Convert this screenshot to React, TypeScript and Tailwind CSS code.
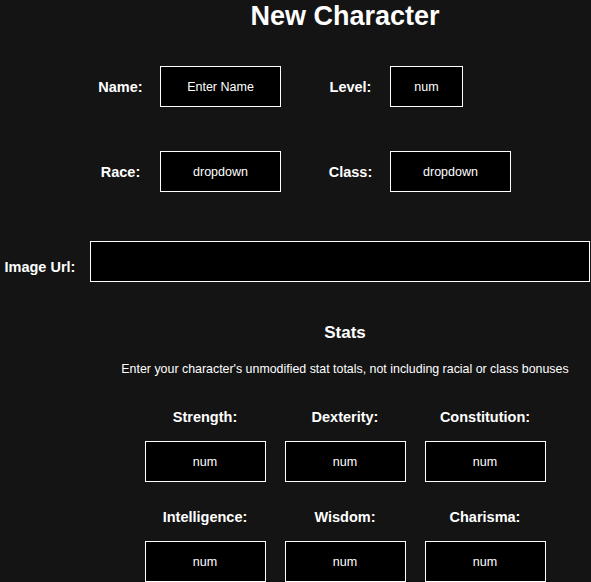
import React from "react";

const box =
  "h-[41px] border border-white bg-black text-center text-[12.5px] text-white placeholder:text-white outline-none font-['Liberation_Sans',Arial,sans-serif]";

function Field({ label, ph, w }: { label: string; ph: string; w: string }) {
  return (
    <>
      <label className="w-[79px] text-center text-[14.5px] font-bold leading-[16px]">{label}</label>
      <input readOnly placeholder={ph} className={`${box} ${w}`} />
    </>
  );
}

function Stat({ label }: { label: string }) {
  return (
    <div className="flex flex-col items-center">
      <label className="text-[14.5px] font-bold leading-[16px] whitespace-nowrap">{label}</label>
      <input readOnly placeholder="num" className={`${box} w-[121px] mt-[16px]`} />
    </div>
  );
}

export default function App() {
  return (
    <div className="w-[591px] h-[582px] overflow-hidden bg-[#141414] text-white font-['Liberation_Sans',Arial,sans-serif]">
      <div className="w-[690px] flex flex-col">
        <h1 className="pt-px text-center text-[27px] font-bold leading-[30px]">New Character</h1>

        <div className="mt-[35px] flex items-center pl-[81px]">
          <Field label="Name:" ph="Enter Name" w="w-[121px]" />
          <div className="w-[30px]" />
          <Field label="Level:" ph="num" w="w-[73px]" />
        </div>

        <div className="mt-[44px] flex items-center pl-[81px]">
          <Field label="Race:" ph="dropdown" w="w-[121px]" />
          <div className="w-[30px]" />
          <Field label="Class:" ph="dropdown" w="w-[121px]" />
        </div>

        <div className="mt-[49px] flex items-center">
          <label className="mt-[10px] w-[80px] text-center text-[14.5px] font-bold leading-[16px]">Image Url:</label>
          <input readOnly className={`${box} w-[500px] ml-[10px]`} />
        </div>

        <h2 className="mt-[41px] text-center text-[17px] font-bold leading-[20px]">Stats</h2>
        <p className="mt-[19px] text-center text-[12.4px] leading-[14px]">
          Enter your character's unmodified stat totals, not including racial or class bonuses
        </p>

        <div className="mt-[33px] mx-auto grid grid-cols-[121px_121px_121px] gap-x-[19px] gap-y-[27px]">
          <Stat label="Strength:" />
          <Stat label="Dexterity:" />
          <Stat label="Constitution:" />
          <Stat label="Intelligence:" />
          <Stat label="Wisdom:" />
          <Stat label="Charisma:" />
        </div>
      </div>
    </div>
  );
}
